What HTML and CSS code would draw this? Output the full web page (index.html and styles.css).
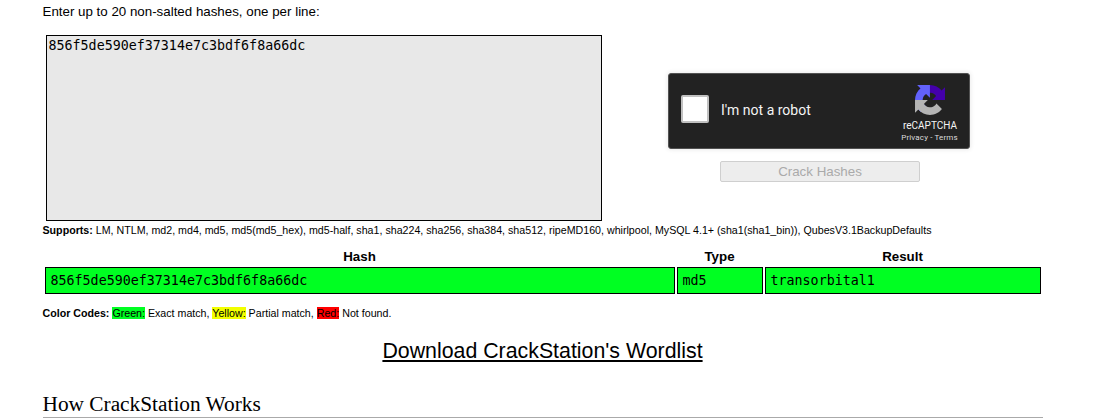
FILE: index.html
```
<!DOCTYPE html>
<html lang="en">
<head>
<meta charset="utf-8">
<title>CrackStation</title>
<link rel="stylesheet" href="styles.css">
</head>
<body>
<main class="page">
  <p class="intro">Enter up to 20 non-salted hashes, one per line:</p>
  <form class="crack-form">
    <textarea class="hashes" spellcheck="false">856f5de590ef37314e7c3bdf6f8a66dc</textarea>
    <div class="submit-area">
      <div class="captcha">
        <span class="checkbox"></span>
        <span class="captcha-label">I'm not a robot</span>
        <div class="brand">
          <svg class="brand-logo" viewBox="0 0 64 64" aria-hidden="true">
            <path fill="#4400ab" d="M64 31.955l-.033-1.37V4.687l-7.16 7.16C50.948 4.674 42.033.093 32.05.093c-10.4 0-19.622 4.96-25.458 12.64l11.736 11.86a15.55 15.55 0 0 1 4.754-5.334c2.05-1.6 4.952-2.906 8.968-2.906.485 0 .86.057 1.135.163 4.976.393 9.288 3.14 11.828 7.124l-8.307 8.307L64 31.953"/>
            <path fill="#6262fb" d="M31.862.094l-1.37.033H4.594l7.16 7.16C4.58 13.147 0 22.06 0 32.046c0 10.4 4.96 19.622 12.64 25.458L24.5 45.768a15.55 15.55 0 0 1-5.334-4.754c-1.6-2.05-2.906-4.952-2.906-8.968 0-.485.057-.86.163-1.135.393-4.976 3.14-9.288 7.124-11.828l8.307 8.307L31.86.095"/>
            <path fill="#b4b4b4" d="M.001 32.045l.033 1.37v25.898l7.16-7.16c5.86 7.173 14.774 11.754 24.76 11.754 10.4 0 19.622-4.96 25.458-12.64l-11.736-11.86a15.55 15.55 0 0 1-4.754 5.334c-2.05 1.6-4.952 2.906-8.968 2.906-.485 0-.86-.057-1.135-.163-4.976-.393-9.288-3.14-11.828-7.124l8.307-8.307c-10.522.04-22.4.066-27.295-.005"/>
          </svg>
          <span class="brand-name">reCAPTCHA</span>
          <span class="brand-links">Privacy - Terms</span>
        </div>
      </div>
      <button class="crack" type="button" disabled>Crack Hashes</button>
    </div>
  </form>
  <p class="supports"><b>Supports:</b> LM, NTLM, md2, md4, md5, md5(md5_hex), md5-half, sha1, sha224, sha256, sha384, sha512, ripeMD160, whirlpool, MySQL 4.1+ (sha1(sha1_bin)), QubesV3.1BackupDefaults</p>
  <div class="results">
    <b class="head">Hash</b><b class="head">Type</b><b class="head">Result</b>
    <span class="cell">856f5de590ef37314e7c3bdf6f8a66dc</span><span class="cell">md5</span><span class="cell">transorbital1</span>
  </div>
  <p class="codes"><b>Color Codes:</b> <span class="green">Green:</span> Exact match, <span class="yellow">Yellow:</span> Partial match, <span class="red">Red:</span> Not found.</p>
  <p class="download"><a href="#">Download CrackStation's Wordlist</a></p>
  <h2 class="title">How CrackStation Works</h2>
</main>
</body>
</html>
```
FILE: styles.css
```
* { box-sizing: border-box; }
body {
  margin: 0;
  overflow: hidden;
  background: #fff;
  color: #000;
  font: 13.333px/16px "Liberation Sans", Arial, sans-serif;
}
.page {
  width: 1000px;
  margin-left: 42.5px;
  padding-top: 4px;
}
p, h2 { margin: 0; }
.crack-form {
  display: flex;
  padding: 15px 0 0 3.5px;
}
.hashes {
  display: block;
  width: 556px;
  height: 186px;
  padding: 2px 2px 2px 1.5px;
  border: 1px solid #000;
  border-radius: 0;
  background: #e8e8e8;
  color: #000;
  font: 13.333px/16px "DejaVu Sans Mono", monospace;
  resize: none;
  outline: none;
}
.submit-area {
  display: flex;
  flex-direction: column;
  gap: 12px;
  width: 302px;
  margin-left: 66px;
  padding-top: 38px;
}
.captcha {
  display: flex;
  align-items: center;
  width: 302px;
  height: 76px;
  padding: 0 12px 0 13px;
  border: 1px solid #525252;
  border-radius: 3px;
  background: #222;
  color: #f4f4f4;
  box-shadow: 0 0 4px 1px rgba(0, 0, 0, .08);
  font-family: Roboto, sans-serif;
}
.checkbox {
  width: 28px;
  height: 28px;
  margin: -4px 0 0 -1px;
  border: 2px solid #c1c1c1;
  border-radius: 2px;
  background: #fff;
}
.captcha-label {
  margin: -2px auto 0 12px;
  font-size: 14px;
}
.brand {
  display: flex;
  flex-direction: column;
  align-items: center;
  width: 57px;
  height: 74px;
  margin-right: -1px;
  padding-top: 11px;
  white-space: nowrap;
}
.brand-logo { width: 30px; height: 30px; }
.brand-name { margin: 5px 0 0 1px; font-size: 10px; line-height: 12px; }
.brand-links {
  margin-top: 1px;
  color: #ddd;
  font-size: 8px;
  line-height: 10px;
  letter-spacing: .15px;
}
.crack {
  width: 200px;
  height: 21px;
  margin-left: 52px;
  padding: 0;
  border: 1px solid #cfcfcf;
  border-radius: 2px;
  background: #ededed;
  color: #aaa;
  font: 13.333px/19px "Liberation Sans", Arial, sans-serif;
}
.supports, .codes { font-size: 10.667px; line-height: 12px; }
.supports { padding-top: 3px; }
.results {
  display: grid;
  grid-template-columns: 630px 86px 276px;
  column-gap: 2px;
  padding: 13px 0 0 2.5px;
}
.head { height: 18px; padding-right: 1px; text-align: center; }
.cell {
  height: 27px;
  padding: 5px 5px 5px 4.5px;
  border: 1px solid #000;
  background: #00ff22;
  font: 13.333px/16px "DejaVu Sans Mono", monospace;
}
.codes { padding-top: 13px; }
.green { background: #00ff22; }
.yellow { background: #f2ff00; }
.red { background: #f00; }
.download {
  padding-top: 20px;
  font-size: 21.333px;
  line-height: 24px;
  text-align: center;
}
.download a { color: #000; }
.title {
  height: 55px;
  padding-top: 29px;
  border-bottom: 1px solid #aaa;
  font: 21.333px/25px "Liberation Serif", "Times New Roman", serif;
}
```
